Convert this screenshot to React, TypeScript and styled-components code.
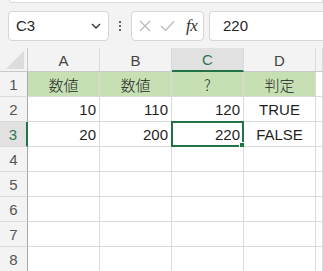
import React from "react";
import styled, { createGlobalStyle } from "styled-components";

const GlobalStyle = createGlobalStyle`
  html, body {
    margin: 0;
    padding: 0;
    background: #f3f3f3;
    overflow: hidden;
  }
  body {
    font-family: "Liberation Sans", "Noto Sans CJK JP", sans-serif;
  }
`;

const Page = styled.div`
  width: 323px;
  height: 271px;
  overflow: hidden;
  display: flex;
  flex-direction: column;
`;

const RibbonEdge = styled.div`
  height: 2px;
  margin-left: 9px;
  background: #ffffff;
  border: 1px solid #dcdcdc;
  border-top: none;
  border-bottom-left-radius: 6px;
  flex-shrink: 0;
`;

const Toolbar = styled.div`
  height: 45px;
  display: flex;
  align-items: center;
  padding-left: 8px;
  box-sizing: border-box;
  flex-shrink: 0;
`;

const Box = styled.div<{ $w?: number; $grow?: boolean }>`
  height: 30px;
  box-sizing: border-box;
  background: #ffffff;
  border: 1px solid #d6d6d6;
  border-radius: 4px;
  display: flex;
  align-items: center;
  width: ${(p) => (p.$w ? `${p.$w}px` : "auto")};
  flex: ${(p) => (p.$grow ? "1" : "none")};
  ${(p) => (p.$grow ? "border-right: none; border-radius: 4px 0 0 4px;" : "")}
`;

const NameText = styled.span`
  font-size: 15px;
  color: #262626;
  padding-left: 7px;
  flex: 1;
`;

const Chevron = styled.svg`
  margin-right: 7px;
`;

const Dots = styled.div`
  width: 22px;
  display: flex;
  flex-direction: column;
  align-items: center;
  gap: 2px;
  span {
    width: 2px;
    height: 2px;
    background: #333;
    border-radius: 1px;
  }
`;

const IconSlot = styled.div<{ $first?: boolean }>`
  display: flex;
  align-items: center;
  justify-content: center;
  width: 22px;
  margin-left: ${(p) => (p.$first ? "2px" : "0")};
`;

const Fx = styled.span`
  font-family: "Liberation Serif", "DejaVu Serif", serif;
  font-style: italic;
  font-size: 17px;
  color: #333;
  margin-left: 8px;
  letter-spacing: -0.5px;
`;

const Spacer = styled.div`
  width: 5px;
  flex: none;
`;

const FormulaText = styled.span`
  font-size: 15px;
  color: #262626;
  padding-left: 13px;
`;

const Sheet = styled.div`
  display: grid;
  grid-template-columns: 28px 72px 72px 72px 72px 1fr;
  grid-template-rows: 24px;
  grid-auto-rows: 25px;
  background: #ffffff;
  flex: 1;
`;

const Corner = styled.div`
  background: #f3f3f3;
  border-right: 1px solid #c8c8c8;
  border-bottom: 1px solid #c8c8c8;
  position: relative;
  box-sizing: border-box;
  &::after {
    content: "";
    position: absolute;
    right: 3px;
    bottom: 2px;
    width: 0;
    height: 0;
    border-left: 18px solid transparent;
    border-bottom: 18px solid #dcdcdc;
  }
`;

const ColHead = styled.div<{ $sel?: boolean }>`
  background: ${(p) => (p.$sel ? "#e1e1e1" : "#f3f3f3")};
  color: ${(p) => (p.$sel ? "#2f7452" : "#444")};
  border-right: 1px solid #dadada;
  border-bottom: ${(p) => (p.$sel ? "2px solid #217346" : "1px solid #c8c8c8")};
  box-sizing: border-box;
  display: flex;
  align-items: center;
  justify-content: center;
  font-size: 15px;
  padding-top: 1px;
`;

const RowHead = styled.div<{ $sel?: boolean }>`
  background: ${(p) => (p.$sel ? "#e1e1e1" : "#f3f3f3")};
  color: ${(p) => (p.$sel ? "#2f7452" : "#555")};
  border-right: ${(p) => (p.$sel ? "2px solid #217346" : "1px solid #a8a8a8")};
  border-bottom: 1px solid #dadada;
  box-sizing: border-box;
  display: flex;
  align-items: center;
  justify-content: center;
  font-size: 15px;
`;

const Cell = styled.div<{ $align?: "left" | "right" | "center"; $head?: boolean }>`
  position: relative;
  background: ${(p) => (p.$head ? "#c6e0b4" : "#ffffff")};
  border-right: 1px solid #dadada;
  border-bottom: 1px solid #dadada;
  box-sizing: border-box;
  display: flex;
  align-items: center;
  justify-content: ${(p) =>
    p.$align === "right" ? "flex-end" : p.$align === "center" ? "center" : "flex-start"};
  padding: 0 3px;
  font-size: 15px;
  color: #1f1f1f;
  ${(p) => (p.$head ? 'font-family: "Noto Sans CJK JP", sans-serif; font-size: 15px; font-weight: 300;' : "")}
`;

const Selection = styled.div`
  position: absolute;
  left: -1px;
  top: -1px;
  right: -1px;
  bottom: -1px;
  border: 2px solid #217346;
  pointer-events: none;
  &::after {
    content: "";
    position: absolute;
    right: -4px;
    bottom: -4px;
    width: 5px;
    height: 5px;
    background: #217346;
    border: 1px solid #ffffff;
  }
`;

const cols = ["A", "B", "C", "D"];

type Row = { vals: (string | number)[]; head?: boolean };

const rows: Row[] = [
  { vals: ["数値", "数値", "?", "判定"], head: true },
  { vals: [10, 110, 120, "TRUE"] },
  { vals: [20, 200, 220, "FALSE"] },
  { vals: ["", "", "", ""] },
  { vals: ["", "", "", ""] },
  { vals: ["", "", "", ""] },
  { vals: ["", "", "", ""] },
  { vals: ["", "", "", ""] },
];

export default function App() {
  return (
    <Page>
      <GlobalStyle />
      <RibbonEdge />
      <Toolbar>
        <Box $w={101}>
          <NameText>C3</NameText>
          <Chevron width="10" height="6" viewBox="0 0 10 6">
            <path d="M1 1 L5 5 L9 1" fill="none" stroke="#333" strokeWidth="1.3" />
          </Chevron>
        </Box>
        <Dots>
          <span />
          <span />
          <span />
        </Dots>
        <Box $w={73}>
          <IconSlot $first>
            <svg width="12" height="12" viewBox="0 0 12 12">
              <path d="M1 1 L11 11 M11 1 L1 11" stroke="#b8b8b8" strokeWidth="1.2" />
            </svg>
          </IconSlot>
          <IconSlot>
            <svg width="15" height="12" viewBox="0 0 15 12">
              <path d="M1 6 L5.5 10.5 L14 1.5" fill="none" stroke="#b8b8b8" strokeWidth="1.2" />
            </svg>
          </IconSlot>
          <Fx>fx</Fx>
        </Box>
        <Spacer />
        <Box $grow>
          <FormulaText>220</FormulaText>
        </Box>
      </Toolbar>
      <Sheet>
        <Corner />
        {cols.map((c) => (
          <ColHead key={c} $sel={c === "C"}>
            {c}
          </ColHead>
        ))}
        <ColHead />
        {rows.map((r, i) => (
          <React.Fragment key={i}>
            <RowHead $sel={i === 2}>{i + 1}</RowHead>
            {r.vals.map((v, j) => (
              <Cell
                key={j}
                $head={r.head}
                $align={r.head || typeof v === "string" ? "center" : "right"}
              >
                {v}
                {i === 2 && j === 2 && <Selection />}
              </Cell>
            ))}
            <Cell />
          </React.Fragment>
        ))}
      </Sheet>
    </Page>
  );
}
